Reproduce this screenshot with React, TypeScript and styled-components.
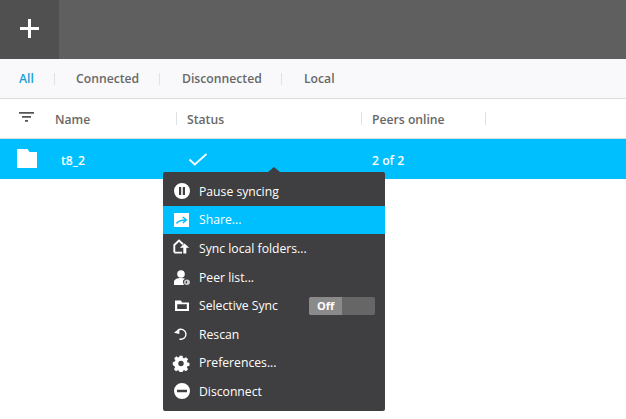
import React from 'react'
import styled, { createGlobalStyle } from 'styled-components'

const Global = createGlobalStyle`
  html, body {
    margin: 0;
    padding: 0;
    background: #fff;
    overflow: hidden;
  }
  body {
    font-family: "Open Sans", "Noto Sans", sans-serif;
    font-size: 12.2px;
  }
`

const Page = styled.div`
  position: relative;
  width: 626px;
  height: 419px;
  background: #fff;
`

const TopBar = styled.div`
  height: 59px;
  background: #5f5f5f;
  display: flex;
`

const AddButton = styled.div`
  width: 59px;
  height: 59px;
  padding-bottom: 2px;
  box-sizing: border-box;
  background: #505050;
  display: flex;
  align-items: center;
  justify-content: center;
`

const Tabs = styled.div`
  height: 39px;
  background: #f9f9fb;
  border-bottom: 1px solid #dcdcdc;
  display: flex;
  align-items: center;
  padding-left: 19px;
`

const Tab = styled.div<{ $active?: boolean; $width: number; $pad?: number }>`
  width: ${(p) => p.$width}px;
  padding-left: ${(p) => p.$pad ?? 0}px;
  box-sizing: border-box;
  color: ${(p) => (p.$active ? '#1a9fd8' : '#686868')};
  font-weight: 600;
  line-height: 39px;
  white-space: nowrap;
  display: flex;
  align-items: center;
`

const TabLabel = styled.span`
  flex: 1;
`

const Divider = styled.span<{ $height: number }>`
  display: block;
  width: 1px;
  height: ${(p) => p.$height}px;
  background: #e2e2e2;
  flex: none;
`

const ColumnHeader = styled.div`
  height: 39px;
  border-bottom: 2px solid #dcdcdc;
  display: flex;
  align-items: center;
  color: #686868;
  font-weight: 600;
`

const FilterCell = styled.div`
  width: 55px;
  padding: 0 0 2px 19px;
  box-sizing: border-box;
  display: flex;
`

const Column = styled.div<{ $width: number; $pad?: number }>`
  width: ${(p) => p.$width}px;
  padding-left: ${(p) => p.$pad ?? 0}px;
  box-sizing: border-box;
  display: flex;
  align-items: center;
  white-space: nowrap;
`

const ColumnLabel = styled.span`
  flex: 1;
  padding-top: 2px;
`

const SelectedRow = styled.div`
  height: 40px;
  margin-top: -1px;
  background: #00bfff;
  color: #fff;
  font-weight: 600;
  display: flex;
  align-items: center;
`

const RowIcon = styled.div`
  width: 61px;
  padding: 0 0 2px 17px;
  box-sizing: border-box;
  display: flex;
`

const RowName = styled.div`
  width: 127px;
  padding-top: 2px;
`

const RowStatus = styled.div`
  width: 184px;
  display: flex;
`

const RowPeers = styled.div`
  padding-top: 2px;
`

const Menu = styled.div`
  position: absolute;
  left: 163px;
  top: 172px;
  width: 222px;
  height: 239px;
  padding: 5px 0;
  box-sizing: border-box;
  background: #3f3e40;
  border-radius: 2px;
  display: flex;
  flex-direction: column;

  &::before {
    content: '';
    position: absolute;
    left: 105px;
    top: -5px;
    border-left: 6px solid transparent;
    border-right: 6px solid transparent;
    border-bottom: 5px solid #3f3e40;
  }
`

const MenuItem = styled.div<{ $active?: boolean }>`
  height: 28.6px;
  flex: none;
  display: flex;
  align-items: center;
  background: ${(p) => (p.$active ? '#00bfff' : 'transparent')};
  color: #fff;
  white-space: nowrap;
`

const MenuIcon = styled.div`
  width: 36px;
  padding-left: 9px;
  box-sizing: border-box;
  display: flex;
  flex: none;
`

const MenuLabel = styled.span`
  flex: 1;
`

const Toggle = styled.div`
  width: 66px;
  height: 18px;
  margin-right: 10px;
  background: #666;
  border-radius: 2px;
  display: flex;
  overflow: hidden;
`

const ToggleKnob = styled.div`
  width: 33px;
  background: #8a8a8a;
  color: #fff;
  font-weight: 700;
  font-size: 11px;
  line-height: 18px;
  padding-left: 8px;
  box-sizing: border-box;
`

const Ico = styled.svg`
  display: block;
  fill: #fff;
`

const PauseIcon = () => (
  <Ico width="18" height="18" viewBox="-1 0 18 18">
    <path fillRule="evenodd" d="M9 1a8 8 0 1 0 0 16A8 8 0 0 0 9 1ZM6 5h2.200v8H6Zm3.800 0H12v8H9.800Z" />
  </Ico>
)

const ShareIcon = () => (
  <Ico width="18" height="18" viewBox="0 0 18 18">
    <path d="M2 2h15v14H2Z" />
    <path d="M4.500 12.500C6 10 8.500 9 14 9M10.800 6 14.300 9 10.800 12" fill="none" stroke="#00bfff" strokeWidth="1.500" />
  </Ico>
)

const SyncIcon = () => (
  <Ico width="18" height="18" viewBox="0 0 18 18">
    <path d="M2.300 13.600V6L7 1.500 11 5.300M2.300 13.600H10" fill="none" stroke="#fff" strokeWidth="1.900" />
    <path d="M12.500 4.500 17.200 8.800H14.300V14.500H11.300V8.800H7.800Z" />
  </Ico>
)

const PeerIcon = () => (
  <Ico width="18" height="18" viewBox="-1 -1 18 18">
    <circle cx="8" cy="5" r="3.800" />
    <path d="M1 16v-3c0-2.500 3-4 7-4 1.500 0 3 .2 4.200.7-1.200.4-2.200 1.300-2.200 3 0 1.300.5 2.500 1.500 3.300Z" />
    <path fillRule="evenodd" d="M14 10.500c1.700 0 3 1.200 3 2.800S15.700 16 14 16s-3-1.100-3-2.700 1.300-2.800 3-2.800Zm0 1.500c-.8 0-1.500.6-1.500 1.300s.7 1.200 1.500 1.200z" opacity=".75" />
  </Ico>
)

const FolderOutlineIcon = () => (
  <Ico width="18" height="18" viewBox="0 0 18 18">
    <path fillRule="evenodd" d="M3 3.500h6l1 2h7V14H3ZM5.200 7.300v4.700h9.600V7.300Z" />
  </Ico>
)

const RescanIcon = () => (
  <Ico width="18" height="18" viewBox="0 0 18 18">
    <path d="M6 5.200A5 5 0 1 1 7.500 14" fill="none" stroke="#fff" strokeWidth="1.400" />
    <path d="M2 7.800 7.300 9V3.500Z" />
  </Ico>
)

const GearIcon = () => (
  <Ico width="18" height="18" viewBox="0 0 18 18">
    <path
      fillRule="evenodd"
      d="M7.300 1h3.400l.4 2.300 1.400.6 2-1.300 2.300 2.400-1.300 1.900.6 1.500 2.200.4v3.300l-2.200.4-.6 1.500 1.300 1.900-2.300 2.300-2-1.300-1.400.6-.4 2.300H7.300l-.4-2.300-1.400-.6-2 1.300-2.300-2.300 1.300-1.900-.6-1.500L0 11.100V7.800l2.200-.4.6-1.500L1.500 4 3.800 1.600l2 1.300 1.400-.6ZM9 6.500a3 3 0 1 0 0 6 3 3 0 0 0 0-6Z"
      transform="translate(.8 .8) scale(.91)"
    />
  </Ico>
)

const DisconnectIcon = () => (
  <Ico width="18" height="18" viewBox="-1 0 18 18">
    <path fillRule="evenodd" d="M9 1a8 8 0 1 0 0 16A8 8 0 0 0 9 1ZM4 7.700h10v2.600H4Z" />
  </Ico>
)

const App: React.FC = () => {
  return (
    <Page>
      <Global />
      <TopBar>
        <AddButton>
          <svg width="19" height="19" viewBox="0 0 19 19">
            <path d="M8 0h3v8h8v3h-8v8H8v-8H0V8h8Z" fill="#fff" />
          </svg>
        </AddButton>
      </TopBar>
      <Tabs>
        <Tab $active $width={36}>
          <TabLabel>All</TabLabel>
          <Divider $height={12} />
        </Tab>
        <Tab $width={105} $pad={21}>
          <TabLabel>Connected</TabLabel>
          <Divider $height={12} />
        </Tab>
        <Tab $width={122} $pad={22}>
          <TabLabel>Disconnected</TabLabel>
          <Divider $height={12} />
        </Tab>
        <Tab $width={80} $pad={22}>
          <TabLabel>Local</TabLabel>
        </Tab>
      </Tabs>
      <ColumnHeader>
        <FilterCell>
          <svg width="15" height="11" viewBox="0 0 15 11">
            <path d="M0 0h15v1.700H0ZM3 4h9v1.700H3ZM6 8h3v1.700H6Z" fill="#555" />
          </svg>
        </FilterCell>
        <Column $width={122}>
          <ColumnLabel>Name</ColumnLabel>
          <Divider $height={13} />
        </Column>
        <Column $width={185} $pad={10}>
          <ColumnLabel>Status</ColumnLabel>
          <Divider $height={13} />
        </Column>
        <Column $width={124} $pad={10}>
          <ColumnLabel>Peers online</ColumnLabel>
          <Divider $height={13} />
        </Column>
      </ColumnHeader>
      <SelectedRow>
        <RowIcon>
          <svg width="20" height="19" viewBox="0 0 20 19">
            <path d="M0 0h10.500l2 3H20v16H0Z" fill="#fff" />
          </svg>
        </RowIcon>
        <RowName>t8_2</RowName>
        <RowStatus>
          <svg width="19" height="13" viewBox="0 0 19 13">
            <path d="M1.500 6.500 6.800 11.500 18.500 1" fill="none" stroke="#fff" strokeWidth="1.800" />
          </svg>
        </RowStatus>
        <RowPeers>2 of 2</RowPeers>
      </SelectedRow>
      <Menu>
        <MenuItem>
          <MenuIcon><PauseIcon /></MenuIcon>
          <MenuLabel>Pause syncing</MenuLabel>
        </MenuItem>
        <MenuItem $active>
          <MenuIcon><ShareIcon /></MenuIcon>
          <MenuLabel>Share...</MenuLabel>
        </MenuItem>
        <MenuItem>
          <MenuIcon><SyncIcon /></MenuIcon>
          <MenuLabel>Sync local folders...</MenuLabel>
        </MenuItem>
        <MenuItem>
          <MenuIcon><PeerIcon /></MenuIcon>
          <MenuLabel>Peer list...</MenuLabel>
        </MenuItem>
        <MenuItem>
          <MenuIcon><FolderOutlineIcon /></MenuIcon>
          <MenuLabel>Selective Sync</MenuLabel>
          <Toggle>
            <ToggleKnob>Off</ToggleKnob>
          </Toggle>
        </MenuItem>
        <MenuItem>
          <MenuIcon><RescanIcon /></MenuIcon>
          <MenuLabel>Rescan</MenuLabel>
        </MenuItem>
        <MenuItem>
          <MenuIcon><GearIcon /></MenuIcon>
          <MenuLabel>Preferences...</MenuLabel>
        </MenuItem>
        <MenuItem>
          <MenuIcon><DisconnectIcon /></MenuIcon>
          <MenuLabel>Disconnect</MenuLabel>
        </MenuItem>
      </Menu>
    </Page>
  )
}

export default App
